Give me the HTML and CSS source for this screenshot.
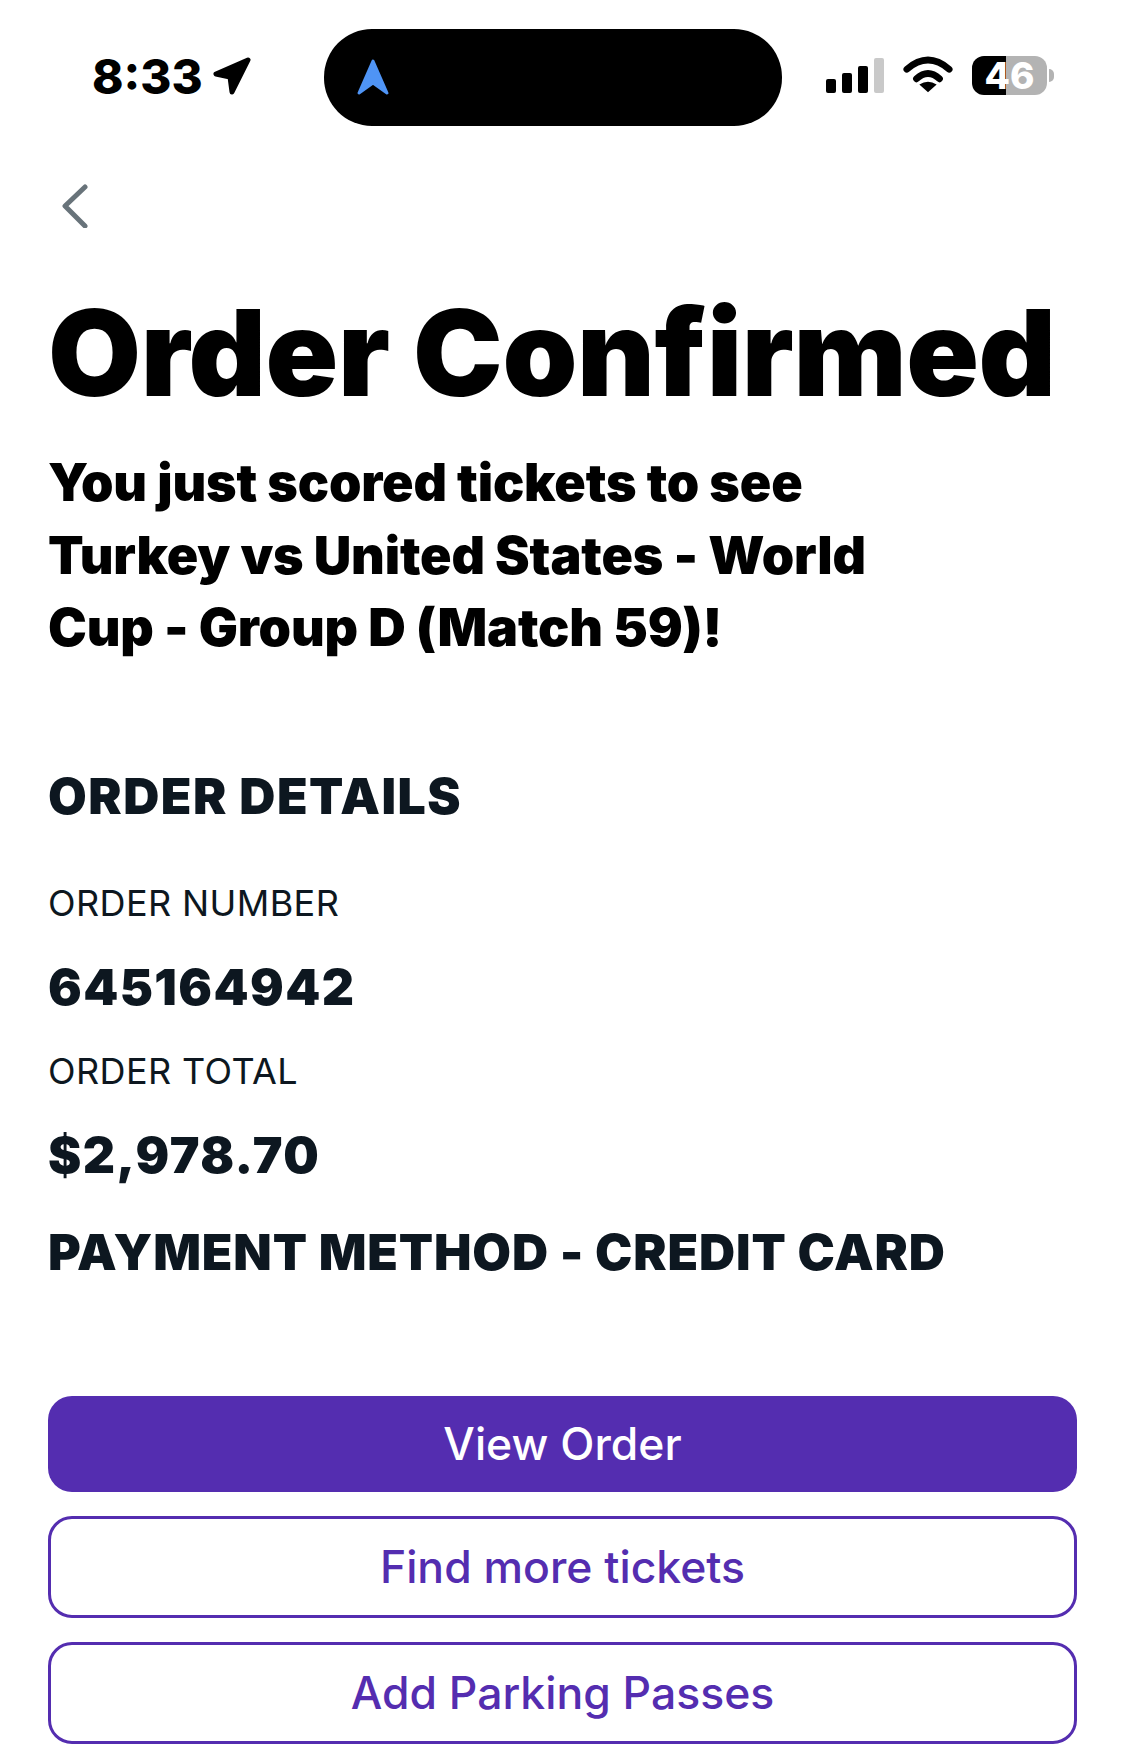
FILE: index.html
```html
<!DOCTYPE html>
<html lang="en">
<head>
  <meta charset="UTF-8" />
  <meta name="viewport" content="width=device-width, initial-scale=1.0" />
  <title>Order Confirmed</title>
  <link rel="stylesheet" href="styles.css">
</head>
<body>
  <div class="status-bar">
    <div class="status-time">
      <span>8:33</span>
      <svg class="location-arrow" width="40" height="40" viewBox="0 0 40 40">
        <path d="M36 4 L4 18 L18 21 L20 36 Z" fill="#000" stroke="#000" stroke-width="5" stroke-linejoin="round"/>
      </svg>
    </div>
    <div class="island">
      <svg width="34" height="38" viewBox="0 0 34 38">
        <path d="M17 3 L31 35 L17 25 L3 35 Z" fill="#4f94f5" stroke="#4f94f5" stroke-width="3" stroke-linejoin="round"/>
      </svg>
    </div>
    <div class="status-icons">
      <div class="signal">
        <span class="bar bar-1"></span>
        <span class="bar bar-2"></span>
        <span class="bar bar-3"></span>
        <span class="bar bar-4"></span>
      </div>
      <svg class="wifi" width="50" height="38" viewBox="0 0 52 38">
        <path d="M4 13 Q26 -6 48 13" fill="none" stroke="#000" stroke-width="7" stroke-linecap="round"/>
        <path d="M14 23 Q26 12 38 23" fill="none" stroke="#000" stroke-width="7" stroke-linecap="round"/>
        <path d="M26 37 L17 29 Q26 23 35 29 Z" fill="#000"/>
      </svg>
      <div class="battery">
        <span class="battery-level">46</span>
        <span class="battery-cap"></span>
      </div>
    </div>
  </div>

  <main class="page">
    <a class="back" href="#">
      <svg width="28" height="44" viewBox="0 0 28 44">
        <path d="M24 3 L4 22 L24 42" fill="none" stroke="#68737a" stroke-width="5" stroke-linecap="round" stroke-linejoin="round"/>
      </svg>
    </a>

    <h1>Order Confirmed</h1>
    <p class="lead">You just scored tickets to see<br>Turkey vs United States - World<br>Cup - Group D (Match 59)!</p>

    <section class="details">
      <h2>ORDER DETAILS</h2>
      <div class="label label-first">ORDER NUMBER</div>
      <div class="value">645164942</div>
      <div class="label">ORDER TOTAL</div>
      <div class="value">$2,978.70</div>
      <div class="payment">PAYMENT METHOD - CREDIT CARD</div>
    </section>

    <div class="actions">
      <button class="btn btn-primary">View Order</button>
      <button class="btn btn-outline">Find more tickets</button>
      <button class="btn btn-outline">Add Parking Passes</button>
    </div>
  </main>
</body>
</html>
```

FILE: styles.css
```css
* {
  box-sizing: border-box;
}

body {
  font-family: Inter, "Liberation Sans", sans-serif;
  margin: 0;
  background: #fff;
  color: #000;
  height: 1758px;
  overflow: hidden;
}

.status-bar {
  display: flex;
  align-items: center;
  height: 96px;
  margin-top: 29px;
  padding-left: 92px;
}

.status-time {
  display: flex;
  align-items: center;
  gap: 9px;
  width: 232px;
  margin-bottom: 2px;
  font-size: 47.5px;
  font-weight: 800;
}

.island {
  display: flex;
  align-items: center;
  width: 458px;
  height: 97px;
  padding-left: 32px;
  background: #000;
  border-radius: 48px;
}

.status-icons {
  display: flex;
  align-items: center;
  margin-left: 44px;
  margin-bottom: 4px;
}

.signal {
  display: flex;
  align-items: flex-end;
  gap: 6px;
  height: 36px;
}

.bar {
  width: 10px;
  background: #000;
  border-radius: 2px;
}

.bar-1 { height: 14px; }
.bar-2 { height: 20px; }
.bar-3 { height: 27px; }
.bar-4 { height: 35px; background: #c9c9c9; }

.wifi {
  margin-left: 19px;
}

.battery {
  display: flex;
  align-items: center;
  margin-left: 19px;
}

.battery-level {
  width: 75px;
  height: 39px;
  border-radius: 12px;
  background: linear-gradient(to right, #000 0, #000 34px, #b3b3b3 34px);
  color: #fff;
  font-size: 37px;
  font-weight: 800;
  line-height: 39px;
  text-align: center;
}

.battery-cap {
  width: 5px;
  height: 13px;
  margin-left: 2px;
  background: #b3b3b3;
  border-radius: 0 6px 6px 0;
}

.page {
  padding: 59px 48px 0;
}

.back {
  display: block;
  height: 44px;
  margin-left: 13px;
}

h1 {
  margin: 58px 0 0;
  font-size: 120px;
  font-weight: 900;
  line-height: 134px;
  letter-spacing: -0.4px;
}

.lead {
  margin: 27px 0 0;
  font-size: 52px;
  font-weight: 900;
  line-height: 72.5px;
  letter-spacing: -0.15px;
}

.details {
  color: #0d1720;
}

h2 {
  margin: 101px 0 0;
  font-size: 50px;
  font-weight: 900;
  line-height: 60px;
  letter-spacing: 1.5px;
}

.label {
  font-size: 36px;
  font-weight: 400;
  line-height: 44px;
  margin-top: 32px;
  letter-spacing: 0.4px;
}

.label-first {
  margin-top: 55px;
}

.value {
  font-size: 50px;
  font-weight: 900;
  line-height: 60px;
  margin-top: 32px;
  letter-spacing: 1.4px;
}

.payment {
  font-size: 50px;
  font-weight: 900;
  line-height: 60px;
  margin-top: 37px;
  letter-spacing: 0.85px;
}

.actions {
  display: flex;
  flex-direction: column;
  margin-top: 114px;
  width: 1029px;
}

.btn {
  font-family: inherit;
  font-size: 44.5px;
  font-weight: 500;
  border-radius: 24px;
  padding: 0;
  cursor: pointer;
}

.btn-primary {
  height: 96px;
  background: #542db0;
  color: #fff;
  border: none;
}

.btn-outline {
  height: 102px;
  margin-top: 24px;
  background: #fff;
  color: #542db0;
  border: 3px solid #542db0;
}
```
